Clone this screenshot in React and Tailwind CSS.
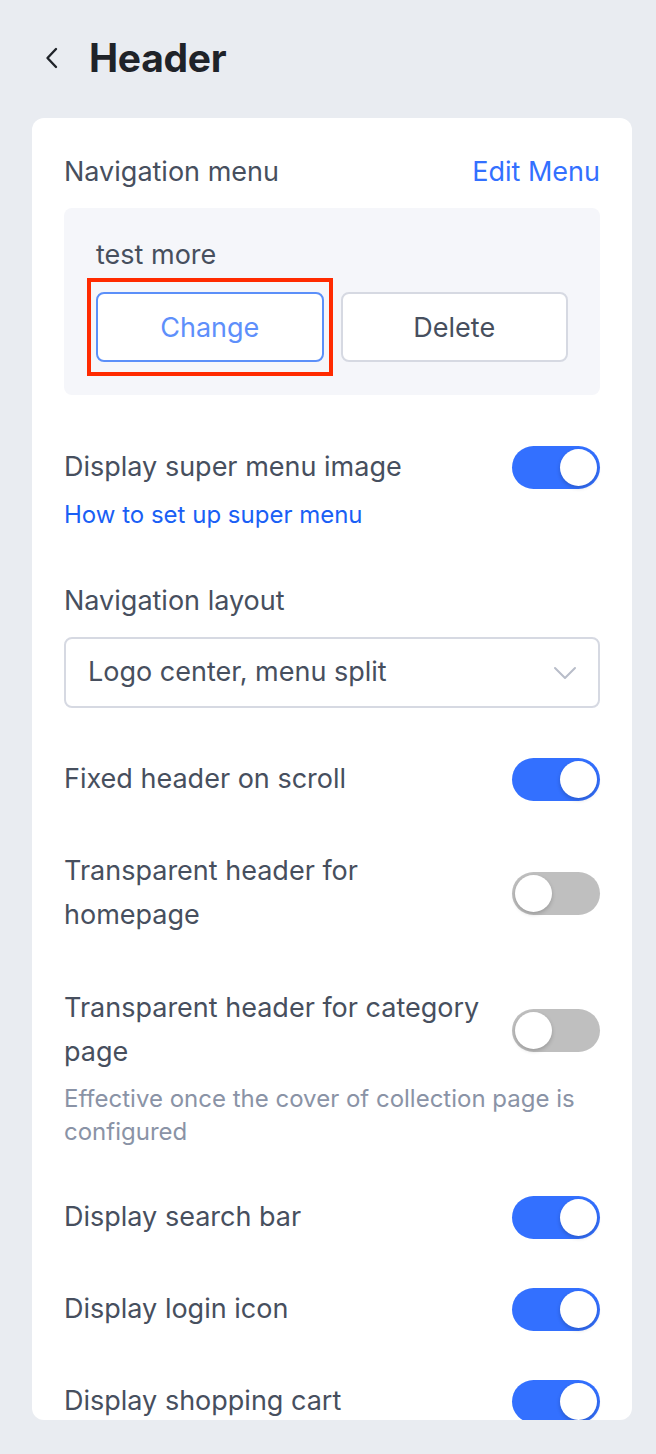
import React from "react";

function Toggle({ on }) {
  return (
    <div
      className={`relative flex h-[43px] w-[88px] shrink-0 items-center rounded-full px-[3px] ${
        on ? "justify-end bg-[#3370ff]" : "justify-start bg-[#bfbfbf]"
      }`}
    >
      <div className="h-[37px] w-[37px] rounded-full bg-white shadow-[0_2px_4px_rgba(0,0,0,0.2)]" />
    </div>
  );
}

function ToggleRow({ label, on, className = "" }) {
  return (
    <div className={`flex items-center justify-between gap-4 ${className}`}>
      <div className="whitespace-nowrap text-[27px] leading-[44px] text-[#474f5e]">{label}</div>
      <Toggle on={on} />
    </div>
  );
}

export default function App() {
  return (
    <div
      className="min-h-[1454px] bg-[#e9ecf1] pl-[32px] pr-[24px]"
      style={{ fontFamily: "Inter, 'Noto Sans', sans-serif" }}
    >
      {/* title */}
      <div className="flex h-[118px] items-center pb-[2px]">
        <svg width="14" height="22" viewBox="0 0 14 22" className="ml-[13px]">
          <path d="M11 2 L2.5 11 L11 20" fill="none" stroke="#1f2329" strokeWidth="2.4" strokeLinecap="round" strokeLinejoin="round" />
        </svg>
        <h1 className="ml-[30px] text-[39px] font-bold tracking-[-0.3px] text-[#1f2329]">Header</h1>
      </div>

      {/* card */}
      <div className="h-[1302px] overflow-hidden rounded-[12px] bg-white px-[32px] pt-[32px]">
        <div className="flex h-[44px] items-center justify-between">
          <span className="text-[27px] text-[#474f5e]">Navigation menu</span>
          <span className="text-[27px] text-[#3370ff]">Edit Menu</span>
        </div>

        <div className="mt-[14px] rounded-[8px] bg-[#f5f6fa] px-[32px] pb-[33px] pt-[30px]">
          <div className="text-[27px] leading-[34px] text-[#474f5e]">test more</div>
          <div className="relative mt-[20px] grid grid-cols-2 gap-[17px]">
            <button className="h-[70px] rounded-[8px] border-2 border-[#5b8ff9] bg-white pt-[3px] text-[27px] text-[#5e8ffb]">
              Change
            </button>
            <button className="h-[70px] rounded-[8px] border-2 border-[#d6d9e2] bg-white pt-[3px] text-[27px] text-[#474f5e]">
              Delete
            </button>
            <div className="pointer-events-none absolute left-[-9px] top-[-14px] h-[98px] w-[246px] border-[4px] border-[#ff2a00]" />
          </div>
        </div>

        <ToggleRow label="Display super menu image" on className="mt-[50px]" />
        <a className="mt-[10px] block text-[24px] leading-[32px] text-[#1a5ff5]">How to set up super menu</a>

        <div className="mt-[48px] text-[27px] leading-[44px] text-[#474f5e]">Navigation layout</div>
        <div className="mt-[14px] flex h-[71px] items-center justify-between rounded-[8px] border-2 border-[#d6d9e2] pl-[22px] pr-[21px]">
          <span className="text-[27px] text-[#474f5e]">Logo center, menu split</span>
          <svg width="24" height="14" viewBox="0 0 24 14">
            <path d="M2 2 L12 12 L22 2" fill="none" stroke="#b8bdc9" strokeWidth="2" strokeLinecap="round" strokeLinejoin="round" />
          </svg>
        </div>

        <ToggleRow label="Fixed header on scroll" on className="mt-[49px]" />
        <ToggleRow label={<>Transparent header for<br />homepage</>} on={false} className="mt-[48px]" />
        <ToggleRow label={<>Transparent header for category<br />page</>} on={false} className="mt-[49px]" />
        <div className="mt-[8px] text-[24px] leading-[33px] text-[#8a93a6]">
          Effective once the cover of collection page is
          <br />
          configured
        </div>

        <ToggleRow label="Display search bar" on className="mt-[47px]" />
        <ToggleRow label="Display login icon" on className="mt-[48px]" />
        <ToggleRow label="Display shopping cart" on className="mt-[48px]" />
      </div>
    </div>
  );
}
